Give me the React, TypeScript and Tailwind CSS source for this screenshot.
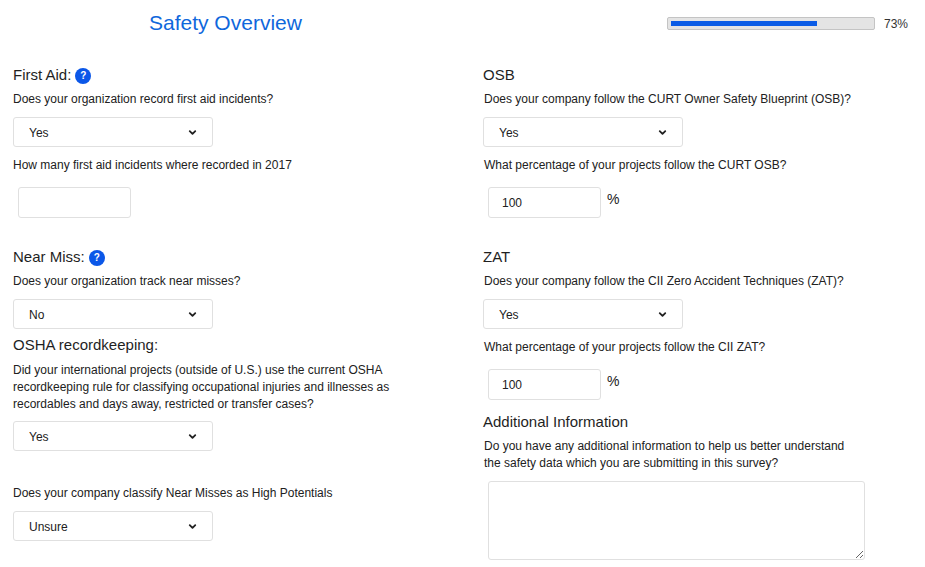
import React from 'react';
import { ChevronDown } from 'lucide-react';

function Heading({ text, help, className }: { text: string; help?: boolean; className?: string }) {
  return (
    <div className={`flex items-center h-[18px] text-[15px] leading-[18px] text-[#1f1f1f] ${className ?? ''}`}>
      <span>{text}</span>
      {help && (
        <span className="ml-[4px] mt-[2px] flex items-center justify-center w-4 h-4 rounded-full bg-[#0b57e8] text-white text-[10px] font-bold leading-none">
          ?
        </span>
      )}
    </div>
  );
}

function Question({ children, className }: { children: React.ReactNode; className?: string }) {
  return <p className={`text-xs leading-[17px] text-[#212121] ${className ?? ''}`}>{children}</p>;
}

function Select({ value, className }: { value: string; className?: string }) {
  return (
    <div className={`relative w-[200px] h-[30px] ${className ?? ''}`}>
      <select
        defaultValue={value}
        className="appearance-none w-full h-full pl-[15px] pr-8 pt-px bg-white border border-[#e0e0e0] rounded-[3px] text-xs text-[#212121] outline-none"
      >
        <option>Yes</option>
        <option>No</option>
        <option>Unsure</option>
      </select>
      <ChevronDown className="absolute right-[15px] top-[10px] w-[11px] h-[11px] text-[#212121] pointer-events-none" strokeWidth={4} />
    </div>
  );
}

function NumberInput({ value, percent, className }: { value?: string; percent?: boolean; className?: string }) {
  return (
    <div className={`flex items-start ml-[5px] ${className ?? ''}`}>
      <input
        type="text"
        defaultValue={value}
        className="w-[113px] h-[31px] px-[13px] bg-white border border-[#e0e0e0] rounded-[3px] text-xs text-[#212121] outline-none"
      />
      {percent && <span className="ml-[6px] mt-[3px] text-sm leading-[18px] text-[#212121]">%</span>}
    </div>
  );
}

export default function App() {
  return (
    <div className="w-[925px] h-[567px] overflow-hidden bg-white font-['Liberation_Sans',Arial,sans-serif]">
      <header className="relative h-[66px]">
        <h1 className="pl-[149px] pt-[10px] text-[21px] leading-[26px] font-normal text-[#0f67dc]">Safety Overview</h1>
        <div className="absolute left-[667px] top-[16px] flex items-center">
          <div className="w-[208px] h-[13px] px-[3px] py-[3px] bg-[#e4e4e4] border border-[#c4c4c4] rounded-[2px]">
            <div className="w-[146px] h-[5px] bg-[#0b5ce6]" />
          </div>
          <span className="ml-[9px] pt-px text-xs leading-[14px] text-[#333333]">73%</span>
        </div>
      </header>

      <main className="grid grid-cols-[470px_1fr] pl-[13px]">
        <section>
          <Heading text="First Aid:" help />
          <Question className="mt-[7px]">Does your organization record first aid incidents?</Question>
          <Select value="Yes" className="mt-[9px]" />
          <Question className="mt-[10px]">How many first aid incidents where recorded in 2017</Question>
          <NumberInput className="mt-[13px]" />

          <Heading text="Near Miss:" help className="mt-[30px]" />
          <Question className="mt-[7px]">Does your organization track near misses?</Question>
          <Select value="No" className="mt-[9px]" />

          <Heading text="OSHA recordkeeping:" className="mt-[7px]" />
          <Question className="mt-[8px]">
            Did your international projects (outside of U.S.) use the current OSHA
            <br />
            recordkeeping rule for classifying occupational injuries and illnesses as
            <br />
            recordables and days away, restricted or transfer cases?
          </Question>
          <Select value="Yes" className="mt-[8px]" />

          <Question className="mt-[34px]">Does your company classify Near Misses as High Potentials</Question>
          <Select value="Unsure" className="mt-[9px]" />
        </section>

        <section>
          <Heading text="OSB" />
          <Question className="mt-[7px] ml-px">Does your company follow the CURT Owner Safety Blueprint (OSB)?</Question>
          <Select value="Yes" className="mt-[9px]" />
          <Question className="mt-[10px] ml-px">What percentage of your projects follow the CURT OSB?</Question>
          <NumberInput value="100" percent className="mt-[13px]" />

          <Heading text="ZAT" className="mt-[30px]" />
          <Question className="mt-[7px] ml-px">Does your company follow the CII Zero Accident Techniques (ZAT)?</Question>
          <Select value="Yes" className="mt-[9px]" />
          <Question className="mt-[10px] ml-px">What percentage of your projects follow the CII ZAT?</Question>
          <NumberInput value="100" percent className="mt-[13px]" />

          <Heading text="Additional Information" className="mt-[13px]" />
          <Question className="mt-[7px] ml-px">
            Do you have any additional information to help us better understand
            <br />
            the safety data which you are submitting in this survey?
          </Question>
          <textarea className="block mt-[9px] ml-[5px] w-[377px] h-[79px] bg-white border border-[#e0e0e0] rounded-[3px] outline-none" />
        </section>
      </main>
    </div>
  );
}
